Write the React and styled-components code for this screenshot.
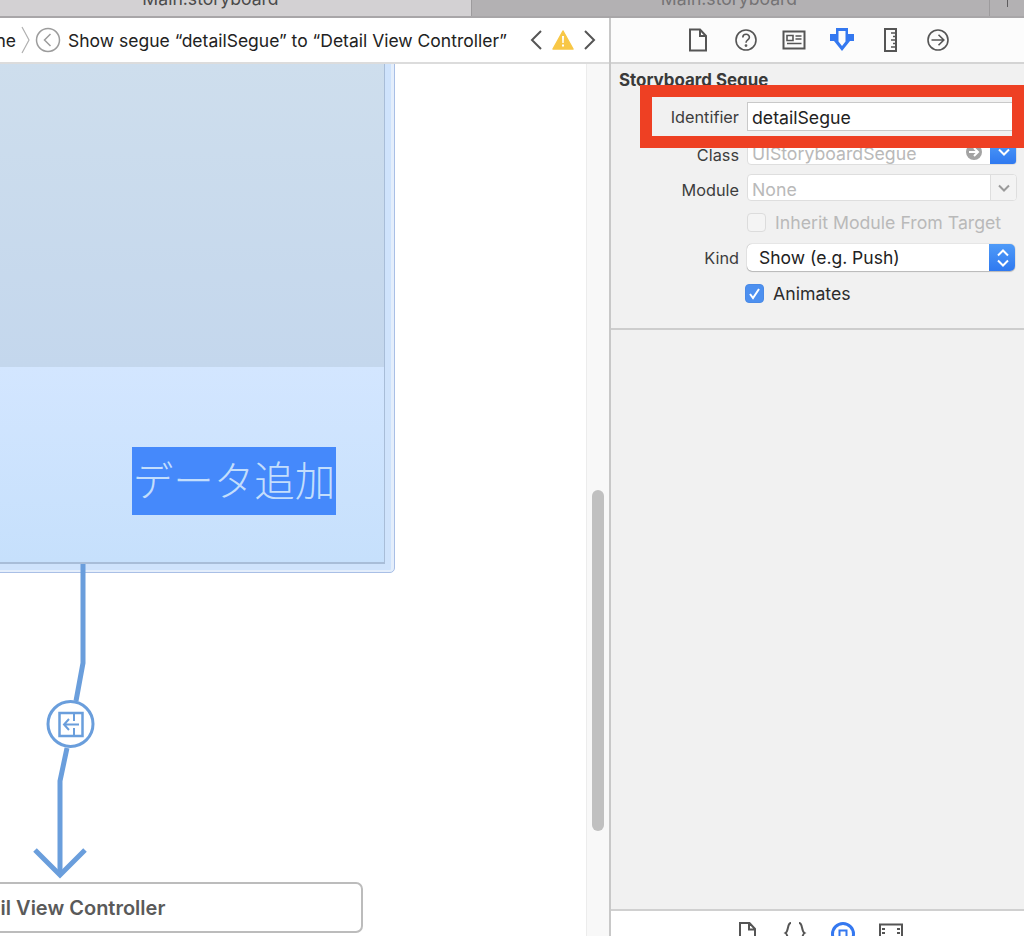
import React from "react";
import styled, { createGlobalStyle } from "styled-components";

const Global = createGlobalStyle`
  html, body {
    margin: 0;
    padding: 0;
    background: #fff;
  }
  body {
    font-family: Inter, "Noto Sans CJK JP", sans-serif;
    color: #222;
  }
`;

const Page = styled.div`
  width: 1024px;
  height: 936px;
  display: flex;
  flex-direction: column;
  overflow: hidden;
`;

const TabBar = styled.div`
  height: 16px;
  flex: none;
  display: flex;
  background: #b3b1b3;
  border-bottom: 2px solid #a8a6a8;
`;

const Tab = styled.div`
  width: ${(p) => p.$width}px;
  flex: none;
  box-sizing: border-box;
  overflow: hidden;
  display: flex;
  justify-content: center;
  padding-right: ${(p) => p.$shift || 0}px;
  background: ${(p) => (p.$active ? "#d3d1d3" : "#b3b1b3")};
  border-right: 1px solid #9d9b9d;
  color: ${(p) => (p.$active ? "#4a4a4a" : "#757375")};
  font-size: 17.6px;
  line-height: 16px;
  white-space: nowrap;
`;

const TabText = styled.span`
  margin-top: -9px;
`;

const TabStub = styled.div`
  flex: 1;
  display: flex;
  justify-content: center;
`;

const TabMark = styled.div`
  width: 1px;
  height: 7px;
  background: #5d5b5d;
`;

const Main = styled.div`
  flex: 1;
  display: flex;
  min-height: 0;
`;

const Editor = styled.div`
  width: 609px;
  flex: none;
  display: flex;
  flex-direction: column;
`;

const JumpBar = styled.div`
  height: 44px;
  flex: none;
  display: flex;
  align-items: center;
  overflow: hidden;
  background: #fff;
  border-bottom: 2px solid #dcdcdc;
  font-size: 17.5px;
  color: #222;
  white-space: nowrap;
`;

const Crumb = styled.span`
  margin-left: -36px;
`;

const Separator = styled.svg`
  width: 10px;
  height: 28px;
  margin-left: 5px;
  flex: none;
`;

const BackButton = styled.svg`
  width: 26px;
  height: 26px;
  margin-left: 4px;
  flex: none;
`;

const SegueTitle = styled.span`
  margin-left: 7px;
`;

const IssueNav = styled.div`
  margin-left: auto;
  padding-right: 12px;
  display: flex;
  align-items: center;
  gap: 9px;
`;

const Workspace = styled.div`
  flex: 1;
  display: flex;
  min-height: 0;
`;

const Stage = styled.div`
  position: relative;
  flex: 1;
  overflow: hidden;
  background: #fff;
`;

const Scene = styled.div`
  position: absolute;
  left: -40px;
  top: -4px;
  width: 435px;
  height: 513px;
  box-sizing: border-box;
  padding: 0 9px 8px 0;
  display: flex;
  background: #cfe3fc;
  border: 1px solid #a9bfe6;
  border-radius: 0 0 5px 0;
  box-shadow: inset -3px 0 0 #e4eefb, inset 0 -2px 0 #e4eefb;
`;

const SceneInner = styled.div`
  flex: 1;
  display: flex;
  flex-direction: column;
  border-right: 1px solid #a8bdd8;
  border-bottom: 2px solid #a8bdd8;
`;

const SceneView = styled.div`
  height: 306px;
  flex: none;
  background: linear-gradient(#cedeed, #c4d7ed);
`;

const SceneBar = styled.div`
  flex: 1;
  display: flex;
  justify-content: flex-end;
  align-items: flex-start;
  padding: 80px 48px 0 0;
  background: linear-gradient(#d3e6ff, #c6e0fc);
`;

const AddButton = styled.div`
  width: 204px;
  height: 68px;
  box-sizing: border-box;
  padding-bottom: 5px;
  display: flex;
  align-items: center;
  justify-content: center;
  background: #4589fb;
  color: #c3defc;
  font-family: "Noto Sans CJK JP", sans-serif;
  font-weight: 300;
  font-size: 40.5px;
  white-space: nowrap;
`;

const SegueLine = styled.svg`
  position: absolute;
  left: 0;
  top: 500px;
  width: 120px;
  height: 320px;
`;

const TargetScene = styled.div`
  position: absolute;
  left: -242px;
  top: 818px;
  width: 605px;
  height: 51px;
  box-sizing: border-box;
  display: flex;
  align-items: center;
  justify-content: center;
  border: 2px solid #bcbcbc;
  border-radius: 7px;
  color: #5a5a5a;
  font-weight: 600;
  font-size: 20px;
  white-space: nowrap;
`;

const ScrollTrack = styled.div`
  width: 23px;
  flex: none;
  box-sizing: border-box;
  padding: 426px 5px 0 5px;
  background: #f8f8f8;
  border-left: 1px solid #ececec;
`;

const ScrollThumb = styled.div`
  height: 341px;
  border-radius: 6px;
  background: #c0c0c0;
`;

const Inspector = styled.div`
  position: relative;
  flex: 1;
  display: flex;
  flex-direction: column;
  background: #f1f1f1;
  border-left: 2px solid #c8c8c8;
`;

const IconBar = styled.div`
  height: 44px;
  flex: none;
  display: flex;
  align-items: center;
  justify-content: center;
  gap: 24px;
  padding-left: 1px;
  background: #fcfcfc;
  border-bottom: 2px solid #d4d4d4;
`;

const SectionTitle = styled.div`
  margin: 6px 0 12px 8px;
  height: 20px;
  line-height: 20px;
  font-weight: 700;
  font-size: 16.9px;
  color: #3a3a3a;
  white-space: nowrap;
`;

const Form = styled.div`
  padding: 0 7px 25px 0;
  border-bottom: 2px solid #cdcdcd;
`;

const Row = styled.div`
  display: grid;
  grid-template-columns: 128px 1fr;
  column-gap: 8px;
  align-items: center;
  height: ${(p) => p.$height}px;
  margin-top: ${(p) => p.$top || 0}px;
`;

const Label = styled.div`
  text-align: right;
  font-size: 16.3px;
  padding-top: ${(p) => p.$drop || 0}px;
  color: #3d3d3d;
`;

const TextField = styled.div`
  height: 100%;
  box-sizing: border-box;
  display: flex;
  align-items: center;
  padding-left: 4px;
  overflow: hidden;
  background: #fff;
  border: 1px solid ${(p) => (p.$disabled ? "#dedede" : "#c9c9c9")};
  border-radius: ${(p) => (p.$disabled ? "4px" : "0")};
  color: ${(p) => (p.$disabled ? "#b9b9b9" : "#222")};
  font-size: 17.7px;
  white-space: nowrap;
`;

const FieldText = styled.span`
  flex: 1;
  padding-top: ${(p) => p.$drop || 0}px;
`;

const ComboButton = styled.div`
  width: 25px;
  align-self: stretch;
  flex: none;
  display: flex;
  align-items: center;
  justify-content: center;
  background: ${(p) => (p.$blue ? "linear-gradient(#4f9bf8, #2f79f0)" : "#f3f3f3")};
  border-left: 1px solid ${(p) => (p.$blue ? "transparent" : "#dedede")};
`;

const SelectBox = styled.div`
  height: 100%;
  margin-right: 2px;
  box-sizing: border-box;
  display: flex;
  align-items: center;
  overflow: hidden;
  padding-left: 12px;
  background: #fff;
  border-radius: 5px;
  box-shadow: 0 0 1px rgba(0, 0, 0, 0.45), 0 1px 1px rgba(0, 0, 0, 0.2);
  font-size: 17.5px;
  color: #222;
  white-space: nowrap;
`;

const CheckRow = styled.div`
  display: flex;
  align-items: center;
  gap: 9px;
  margin-left: ${(p) => (p.$disabled ? 0 : -2)}px;
  font-size: 17.7px;
  white-space: nowrap;
  color: ${(p) => (p.$disabled ? "#b9b9b9" : "#2c2c2c")};
`;

const CheckBox = styled.div`
  width: 19px;
  height: 19px;
  flex: none;
  box-sizing: border-box;
  display: flex;
  align-items: center;
  justify-content: center;
  border-radius: 4px;
  background: ${(p) => (p.$checked ? "#4d90f0" : "#f4f4f4")};
  border: 1px solid ${(p) => (p.$checked ? "#4a8ae6" : "#dcdcdc")};
`;

const Spacer = styled.div`
  flex: 1;
`;

const LibraryBar = styled.div`
  height: 27px;
  flex: none;
  box-sizing: border-box;
  display: flex;
  justify-content: center;
  gap: 24px;
  padding: 11px 0 0 2px;
  overflow: hidden;
  background: #fff;
  border-top: 2px solid #d0d0d0;
`;

const Highlight = styled.div`
  position: absolute;
  left: 29px;
  right: 0;
  top: 67px;
  height: 63px;
  box-sizing: border-box;
  border: 12px solid #ee4023;
`;

const IconSvg = styled.svg`
  width: 24px;
  height: 24px;
  flex: none;
  fill: none;
  stroke: ${(p) => p.$color || "#555"};
  stroke-width: 1.6;
`;

const DocIcon = () => (
  <IconSvg viewBox="0 0 24 24">
    <path d="M4 1.500h10l6 6.500v14.500H4z" strokeWidth="2" />
    <path d="M14 2v6h6" strokeWidth="2" />
  </IconSvg>
);

const HelpIcon = () => (
  <IconSvg viewBox="0 0 24 24">
    <circle cx="12" cy="12" r="10" />
    <path d="M8.800 9.500c0-4.200 6.600-4.200 6.600-.2 0 2.600-3.400 2.600-3.400 5.400" />
    <circle cx="12" cy="17.600" r="0.600" />
  </IconSvg>
);

const CardIcon = () => (
  <IconSvg viewBox="0 0 24 24">
    <path d="M1.500 3.500h21v17h-21z" strokeWidth="2" />
    <path d="M5 7.500h6v5H5z M13.500 8h6 M13.500 11h6 M5 15.500h14.500" />
  </IconSvg>
);

const AttributesIcon = () => (
  <svg width="26" height="24" viewBox="0 0 26 24" style={{ flex: "none", margin: "0 -1px" }}>
    <path
      fillRule="evenodd"
      fill="#3478f0"
      d="M7 0H19V6H25V13H21L13 23L5 13H1V6H7Z M9.500 3V13.500L13 18L16.500 13.500V3Z"
    />
  </svg>
);

const RulerIcon = () => (
  <IconSvg viewBox="0 0 24 24">
    <path d="M7 1h11v22H7z" strokeWidth="2" />
    <path d="M13 5h5 M15 8.500h3 M13 12h5 M15 15.500h3 M13 19h5" />
  </IconSvg>
);

const ForwardIcon = () => (
  <IconSvg viewBox="0 0 24 24">
    <circle cx="12" cy="12" r="10" />
    <path d="M5.500 12h12 M12.500 6.800L17.800 12l-5.300 5.200" />
  </IconSvg>
);

const SmallDocIcon = () => (
  <IconSvg viewBox="0 0 24 24">
    <path d="M5 1h9.500L20 7v17H5z M14 1v6.500h6" strokeWidth="2" />
  </IconSvg>
);

const BracesIcon = () => (
  <IconSvg viewBox="0 0 24 24">
    <path d="M8 1C4 1 6 9 2.500 11 6 13 4 22 8 24 M16 1c4 0 2 8 5.500 10C18 13 20 22 16 24" strokeWidth="2" />
  </IconSvg>
);

const ObjectIcon = () => (
  <IconSvg viewBox="0 0 24 24" $color="#3478f0">
    <circle cx="12" cy="12" r="10.500" strokeWidth="3" />
    <path d="M8.500 8.500h7v7h-7z" strokeWidth="2" />
  </IconSvg>
);

const FilmIcon = () => (
  <IconSvg viewBox="0 0 24 24">
    <path d="M1 2.500h22v22H1z" strokeWidth="2" />
    <path d="M3 7h3 M3 11h3 M3 15h3 M18 7h3 M18 11h3 M18 15h3" strokeWidth="2" />
  </IconSvg>
);

const ChevronDown = ({ color }) => (
  <svg width="14" height="10" viewBox="0 0 14 10" fill="none" stroke={color} strokeWidth="2">
    <path d="M2 2.500l5 5 5-5" />
  </svg>
);

const App = () => (
  <Page>
    <Global />
    <TabBar>
      <Tab $width={472} $active $shift={50}>
        <TabText>Main.storyboard</TabText>
      </Tab>
      <Tab $width={518} $shift={3}>
        <TabText>Main.storyboard</TabText>
      </Tab>
      <TabStub>
        <TabMark />
      </TabStub>
    </TabBar>
    <Main>
      <Editor>
        <JumpBar>
          <Crumb>Scene</Crumb>
          <Separator viewBox="0 0 10 28" fill="none" stroke="#b0b0b0" strokeWidth="1.2">
            <path d="M1 1l7 13-7 13" />
          </Separator>
          <BackButton viewBox="0 0 26 26" fill="none" stroke="#9c9c9c" strokeWidth="1.5">
            <circle cx="13" cy="13" r="11.500" />
            <path d="M15.500 7l-6 6 6 6" />
          </BackButton>
          <SegueTitle>Show segue “detailSegue” to “Detail View Controller”</SegueTitle>
          <IssueNav>
            <svg width="14" height="22" viewBox="0 0 14 22" fill="none" stroke="#555" strokeWidth="2">
              <path d="M12 2L3 11l9 9" />
            </svg>
            <svg width="22" height="20" viewBox="0 0 22 20">
              <path d="M11 1L21 19H1z" fill="#f8c746" stroke="#f8c746" strokeWidth="1.500" strokeLinejoin="round" />
              <path d="M10 6h2l-.3 7h-1.400z M10 14.500h2v2h-2z" fill="#fff" />
            </svg>
            <svg width="14" height="22" viewBox="0 0 14 22" fill="none" stroke="#555" strokeWidth="2">
              <path d="M2 2l9 9-9 9" />
            </svg>
          </IssueNav>
        </JumpBar>
        <Workspace>
          <Stage>
            <Scene>
              <SceneInner>
                <SceneView />
                <SceneBar>
                  <AddButton>データ追加</AddButton>
                </SceneBar>
              </SceneInner>
            </Scene>
            <SegueLine viewBox="0 0 120 320" fill="none" stroke="#6a9edc" strokeWidth="5">
              <path d="M83 0v99l-7 38" />
              <path d="M67 184l-7 33v94" />
              <path d="M35 286l25 25 25-25" />
              <circle cx="70.500" cy="160" r="22.500" strokeWidth="3" fill="#fff" />
              <path d="M59.500 149h23v23h-23z" strokeWidth="2.500" />
              <path d="M74 149v8 M74 164v8 M64 160.500h15 M69 155l-5 5.500 5 5.500" strokeWidth="2" />
            </SegueLine>
            <TargetScene>Detail View Controller</TargetScene>
          </Stage>
          <ScrollTrack>
            <ScrollThumb />
          </ScrollTrack>
        </Workspace>
      </Editor>
      <Inspector>
        <IconBar>
          <DocIcon />
          <HelpIcon />
          <CardIcon />
          <AttributesIcon />
          <RulerIcon />
          <ForwardIcon />
        </IconBar>
        <SectionTitle>Storyboard Segue</SectionTitle>
        <Form>
          <Row $height={29}>
            <Label>Identifier</Label>
            <TextField>
              <FieldText $drop={1}>detailSegue</FieldText>
            </TextField>
          </Row>
          <Row $height={26} $top={8}>
            <Label $drop={5}>Class</Label>
            <TextField $disabled>
              <FieldText $drop={3}>UIStoryboardSegue</FieldText>
              <svg width="18" height="18" viewBox="0 0 18 18" style={{ marginRight: 7 }}>
                <circle cx="9" cy="9" r="8" fill="#a3a3a3" />
                <path d="M4 9h8 M9 5l4 4-4 4" fill="none" stroke="#fff" strokeWidth="2" />
              </svg>
              <ComboButton $blue>
                <ChevronDown color="#fff" />
              </ComboButton>
            </TextField>
          </Row>
          <Row $height={27} $top={9}>
            <Label $drop={5}>Module</Label>
            <TextField $disabled>
              <FieldText $drop={3}>None</FieldText>
              <ComboButton>
                <ChevronDown color="#9a9a9a" />
              </ComboButton>
            </TextField>
          </Row>
          <Row $height={20} $top={11}>
            <span />
            <CheckRow $disabled>
              <CheckBox />
              Inherit Module From Target
            </CheckRow>
          </Row>
          <Row $height={27} $top={12}>
            <Label>Kind</Label>
            <SelectBox>
              <FieldText>Show (e.g. Push)</FieldText>
              <ComboButton $blue>
                <svg width="14" height="20" viewBox="0 0 14 20" fill="none" stroke="#fff" strokeWidth="2">
                  <path d="M2 7.500l5-5 5 5 M2 12.500l5 5 5-5" />
                </svg>
              </ComboButton>
            </SelectBox>
          </Row>
          <Row $height={20} $top={12}>
            <span />
            <CheckRow>
              <CheckBox $checked>
                <svg width="13" height="13" viewBox="0 0 13 13" fill="none" stroke="#fff" strokeWidth="2">
                  <path d="M2 7l3 4 6-9" />
                </svg>
              </CheckBox>
              Animates
            </CheckRow>
          </Row>
        </Form>
        <Spacer />
        <LibraryBar>
          <SmallDocIcon />
          <BracesIcon />
          <ObjectIcon />
          <FilmIcon />
        </LibraryBar>
        <Highlight />
      </Inspector>
    </Main>
  </Page>
);

export default App;
